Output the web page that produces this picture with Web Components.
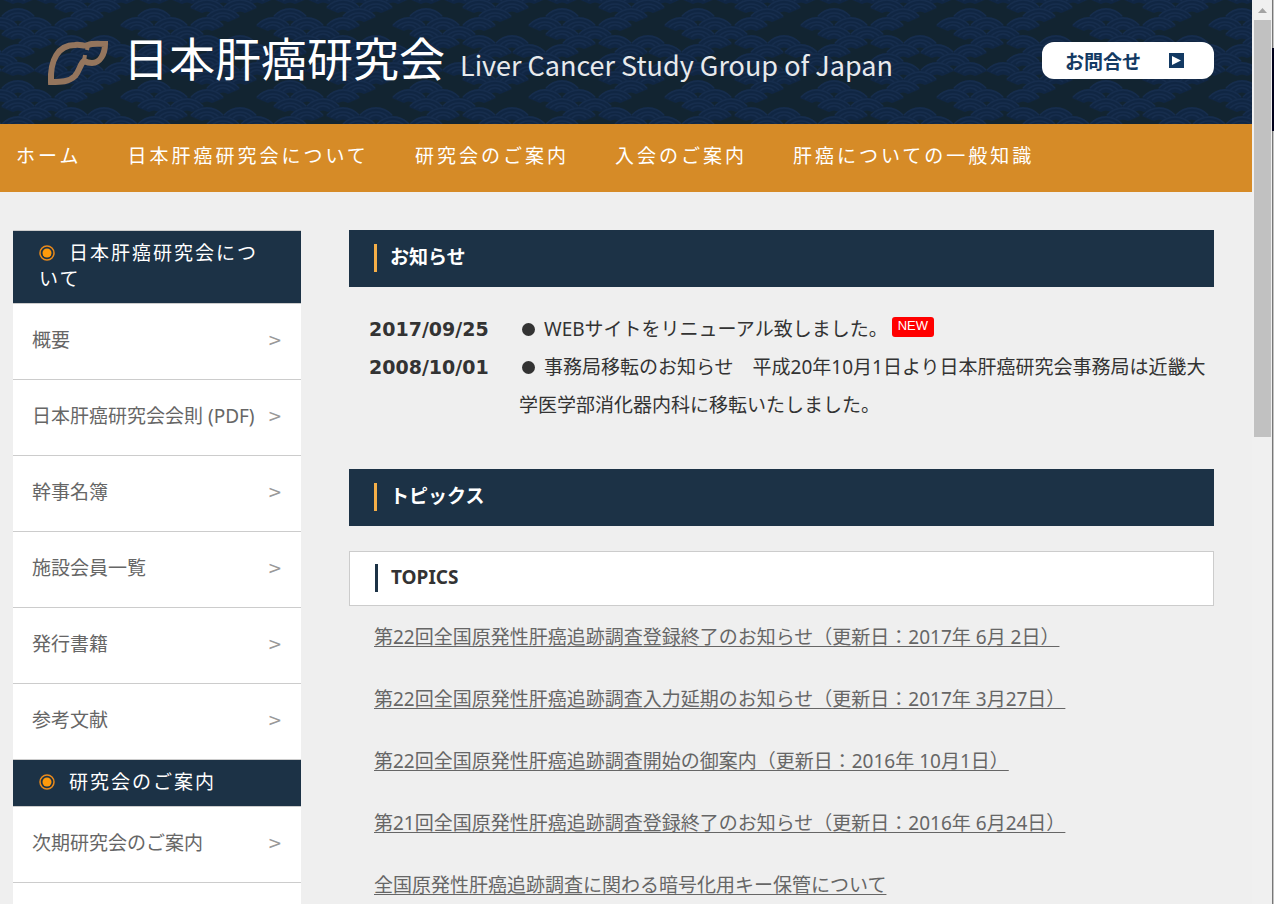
<!DOCTYPE html>
<html lang="ja">
<head>
  <meta charset="UTF-8">
  <meta name="viewport" content="width=device-width, initial-scale=1.0">
  <title>日本肝癌研究会</title>
  <style>
    body {
      margin: 0;
      background: #efefef;
      color: #333;
      font: 19px/38px "Noto Sans", "Noto Sans CJK JP", sans-serif;
    }
  </style>
</head>
<body>
  <page-frame>
    <site-header></site-header>
    <site-nav></site-nav>
    <page-columns>
      <side-menu slot="side" heading="日本肝癌研究会について" items="概要,日本肝癌研究会会則 (PDF),幹事名簿,施設会員一覧,発行書籍,参考文献"></side-menu>
      <side-menu slot="side" heading="研究会のご案内" items="次期研究会のご案内"></side-menu>

      <section-heading>お知らせ</section-heading>
      <news-list>
        <news-item date="2017/09/25" new>WEBサイトをリニューアル致しました。</news-item>
        <news-item date="2008/10/01">事務局移転のお知らせ　平成20年10月1日より日本肝癌研究会事務局は近畿大学医学部消化器内科に移転いたしました。</news-item>
      </news-list>
      <section-heading>トピックス</section-heading>
      <topic-heading>TOPICS</topic-heading>
      <topic-link>第22回全国原発性肝癌追跡調査登録終了のお知らせ（更新日：2017年 6月 2日）</topic-link>
      <topic-link>第22回全国原発性肝癌追跡調査入力延期のお知らせ（更新日：2017年 3月27日）</topic-link>
      <topic-link>第22回全国原発性肝癌追跡調査開始の御案内（更新日：2016年 10月1日）</topic-link>
      <topic-link>第21回全国原発性肝癌追跡調査登録終了のお知らせ（更新日：2016年 6月24日）</topic-link>
      <topic-link>全国原発性肝癌追跡調査に関わる暗号化用キー保管について</topic-link>
    </page-columns>
  </page-frame>

  <script>
    // Attach an open shadow root filled with the given markup
    function render(element, html) {
      element.attachShadow({ mode: 'open' }).innerHTML = html;
    }

    customElements.define('page-frame', class extends HTMLElement {
      constructor() {
        super();
        render(this, `
          <style>
            :host { display: flex; height: 100vh; overflow: hidden; }
            .page { flex: 1; min-width: 0; }
          </style>
          <div class="page"><slot></slot></div>
          <scroll-rail></scroll-rail>
        `);
      }
    });

    customElements.define('scroll-rail', class extends HTMLElement {
      constructor() {
        super();
        render(this, `
          <style>
            :host { display: flex; width: 22px; background: #f0f0f0; }
            .track { display: flex; flex-direction: column; width: 17px; margin-left: 2px; }
            svg { display: block; height: 20px; }
            .thumb { height: 417px; background: #c1c1c1; }
            .edge { width: 1px; margin-left: 1px; background: linear-gradient(#777 48px, #00001a 48px 131px, #777 131px); }
            .outer { width: 1px; background: linear-gradient(#c4c4c4 48px, #00001a 48px 131px, #c4c4c4 131px); }
          </style>
          <div class="track">
            <svg viewBox="0 0 17 20" width="17"><path d="M4 13L8.500 8L13 13Z" fill="#a3a3a3"/></svg>
            <div class="thumb"></div>
          </div>
          <div class="edge"></div>
          <div class="outer"></div>
        `);
      }
    });

    // Overlapping wave fans, repeated every 136 x 73
    customElements.define('wave-pattern', class extends HTMLElement {
      constructor() {
        super();
        const rows = [
          [18, 87],
          [1, 35, 71],
          [18, 51],
          [35, 71, 104],
          [18, 87, 121],
          [1, 71],
          [18, 51, 87, 121],
          [71, 104]
        ];
        let fans = '';
        for (let row = -2; row < 10; row++) {
          const columns = rows[(row + 8) % 8];
          columns.forEach(x => {
            [x - 136, x, x + 136].forEach(left => {
              fans += `<use href="#fan" x="${left}" y="${row * 9}"/>`;
            });
          });
        }
        render(this, `
          <style>
            :host { display: block; background: #122431; }
            svg { display: block; width: 100%; height: 100%; }
          </style>
          <svg aria-hidden="true">
            <defs>
              <g id="fan" fill="none" stroke="#162d4d" stroke-width="1.500">
                <path d="M-17 9Q-10 0 0 0Q10 0 17 9L5 14Q0 11 -5 14Z" fill="#102643" stroke="none"/>
                <path d="M-16 8Q-9 1 0 1Q9 1 16 8"/>
                <path d="M-12 10Q-7 5 0 5Q7 5 12 10"/>
                <path d="M-7 11Q-4 8 0 8Q4 8 7 11"/>
              </g>
              <pattern id="waves" width="136" height="72" y="8" patternUnits="userSpaceOnUse">${fans}</pattern>
            </defs>
            <rect width="100%" height="100%" fill="url(#waves)"/>
          </svg>
        `);
      }
    });

    customElements.define('site-header', class extends HTMLElement {
      constructor() {
        super();
        render(this, `
          <style>
            :host { display: grid; grid-template-rows: 124px; }
            wave-pattern, .bar { grid-area: 1 / 1; min-width: 0; }
            .bar { z-index: 1; display: flex; align-items: center; padding: 0 38px 3px 47px; }
            .brand { display: flex; align-items: baseline; color: #fff; text-decoration: none; white-space: nowrap; }
            .logo { width: 62px; height: 46px; margin: 5px 14px 0 0; align-self: center; }
            .ja { font: 46px/72px "Noto Sans CJK JP", sans-serif; }
            .en { margin-left: 15px; font: 27px/72px "Noto Sans CJK JP", sans-serif; color: #e8eaec; }
            .contact {
              display: flex; align-items: center; justify-content: space-between;
              box-sizing: border-box; width: 172px; height: 37px; margin-left: auto; padding: 0 30px 0 23px;
              border-radius: 12px; background: #fff; color: #133a63; text-decoration: none;
              font: bold 19px/37px "Noto Sans CJK JP", sans-serif;
            }
          </style>
          <wave-pattern></wave-pattern>
          <div class="bar">
            <a class="brand" href="#">
              <svg class="logo" viewBox="0 0 62 46" fill="none" stroke="#94755d" stroke-width="6">
                <path d="M4 42C3 20 11 5 28 5C34 4 37 7 41 5C46 3 52 4 58 4C58 14 53 23 45 23C41 23 39 22 37 21C33 24 33 30 28 36C22 42 14 42 4 42Z"/>
                <path d="M37 21L38 15M41 5L40 10" stroke-width="4"/>
              </svg>
              <span class="ja">日本肝癌研究会</span>
              <span class="en">Liver Cancer Study Group of Japan</span>
            </a>
            <a class="contact" href="#">お問合せ
              <svg width="15" height="15" viewBox="0 0 15 15"><path d="M0 0H15V15H0Z" fill="#133a63"/><path d="M3 3L12 7.500L3 12Z" fill="#fff"/></svg>
            </a>
          </div>
        `);
      }
    });

    customElements.define('site-nav', class extends HTMLElement {
      constructor() {
        super();
        const labels = ['ホーム', '日本肝癌研究会について', '研究会のご案内', '入会のご案内', '肝癌についての一般知識'];
        render(this, `
          <style>
            :host { display: block; background: #d68b27; }
            nav { display: flex; gap: 46px; padding: 13px 16px 17px; }
            a { color: #fff; text-decoration: none; letter-spacing: 3px; white-space: nowrap; }
          </style>
          <nav>${labels.map(label => `<a href="#">${label}</a>`).join('')}</nav>
        `);
      }
    });

    customElements.define('page-columns', class extends HTMLElement {
      constructor() {
        super();
        render(this, `
          <style>
            :host { display: grid; grid-template-columns: 288px minmax(0, 1fr); gap: 48px; padding: 38px 38px 0 13px; }
            aside { border-top: 1px solid #ccc; background: #fff; }
          </style>
          <aside><slot name="side"></slot></aside>
          <main><slot></slot></main>
        `);
      }
    });

    customElements.define('side-menu', class extends HTMLElement {
      connectedCallback() {
        const items = this.getAttribute('items').split(',');
        render(this, `
          <style>
            :host { display: block; }
            h2 {
              margin: 0; padding: 9px 26px 11px; border-bottom: 1px solid #ccc;
              background: #1c3246; color: #fff; font-size: 19px; font-weight: normal; line-height: 26px; letter-spacing: 2px;
            }
            svg { width: 16px; height: 16px; margin-right: 14px; vertical-align: -1px; }
            ul { margin: 0; padding: 0; list-style: none; }
            li { border-bottom: 1px solid #ccc; }
            a {
              display: flex; justify-content: space-between; padding: 17px 19px 20px;
              color: #666; text-decoration: none; white-space: nowrap;
            }
            .arrow { color: #999; font-family: "DejaVu Sans", sans-serif; font-size: 17px; }
          </style>
          <h2><svg viewBox="0 0 16 16" aria-hidden="true"><circle cx="8" cy="8" r="7" fill="none" stroke="#e98a1c" stroke-width="1.500"/><circle cx="8" cy="8" r="4.500" fill="#ff9a0c"/></svg>${this.getAttribute('heading')}</h2>
          <ul>${items.map(item => `<li><a href="#">${item}<span class="arrow">&gt;</span></a></li>`).join('')}</ul>
        `);
      }
    });

    customElements.define('section-heading', class extends HTMLElement {
      constructor() {
        super();
        render(this, `
          <style>
            :host { display: block; padding: 14px 25px 15px; background: #1c3246; color: #fff; }
            h2 { margin: 0; padding: 0 0 2px 13px; border-left: 3px solid #f5af48; font-size: 19px; line-height: 26px; }
          </style>
          <h2><slot></slot></h2>
        `);
      }
    });

    customElements.define('topic-heading', class extends HTMLElement {
      constructor() {
        super();
        render(this, `
          <style>
            :host { display: block; margin-top: 25px; padding: 12px 25px 13px; border: 1px solid #ccc; background: #fff; }
            h3 { margin: 0; padding: 0 0 2px 13px; border-left: 3px solid #1c3246; font-size: 19px; line-height: 26px; }
          </style>
          <h3><slot></slot></h3>
        `);
      }
    });

    customElements.define('news-list', class extends HTMLElement {
      constructor() {
        super();
        render(this, `
          <style>
            :host { display: block; padding: 23px 0 45px 20px; }
          </style>
          <slot></slot>
        `);
      }
    });

    customElements.define('news-item', class extends HTMLElement {
      connectedCallback() {
        const badge = this.hasAttribute('new') ? '<span class="badge">NEW</span>' : '';
        render(this, `
          <style>
            :host { display: flex; }
            time { flex: none; width: 150px; font: bold 19px/38px "DejaVu Sans", sans-serif; }
            .dot { display: inline-block; width: 13px; height: 13px; margin: 0 9px 0 3px; border-radius: 50%; background: #333; }
            .badge {
              display: inline-block; margin-left: 4px; padding: 0 6px 2px; border-radius: 3px;
              background: red; color: #fff; font: 13px/18px "Liberation Sans", sans-serif; vertical-align: 6px;
            }
          </style>
          <time>${this.getAttribute('date')}</time>
          <div><span class="dot"></span><slot></slot>${badge}</div>
        `);
      }
    });

    customElements.define('topic-link', class extends HTMLElement {
      constructor() {
        super();
        render(this, `
          <style>
            :host { display: block; padding-left: 25px; line-height: 62px; }
            a { color: #666; text-underline-offset: 2px; }
          </style>
          <a href="#"><slot></slot></a>
        `);
      }
    });
  </script>
</body>
</html>
